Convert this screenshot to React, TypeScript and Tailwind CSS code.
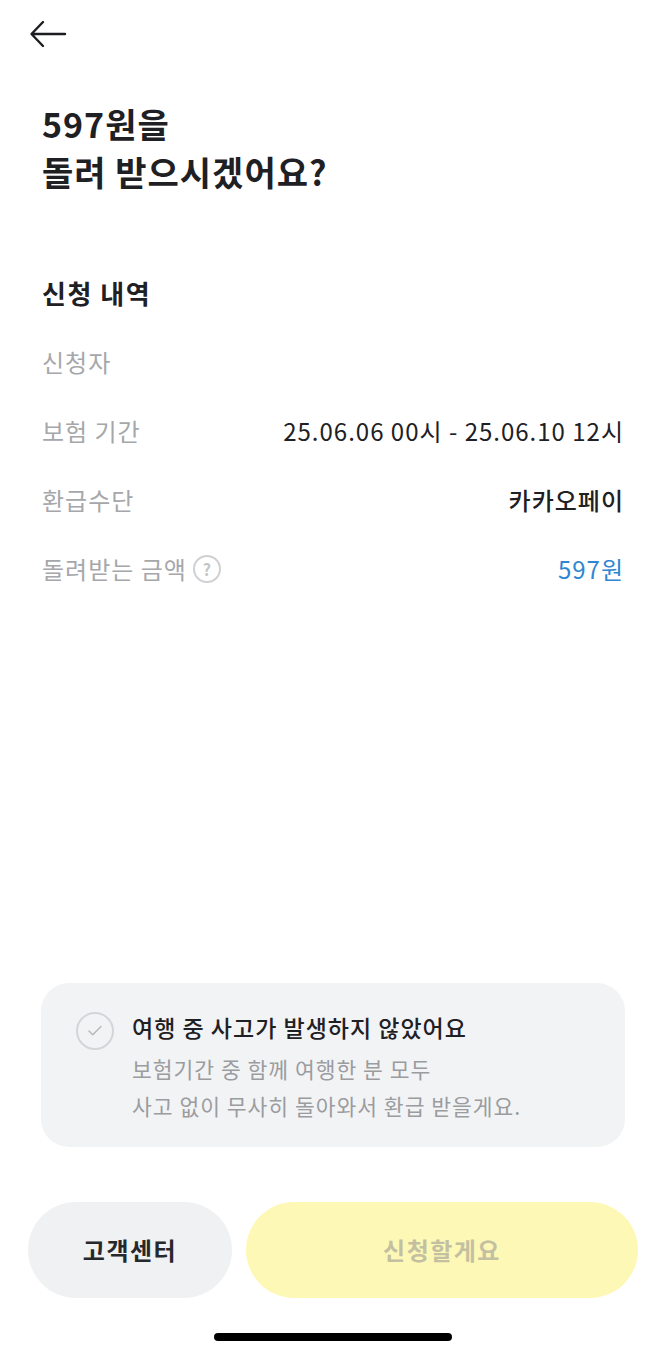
import { Check } from 'lucide-react';

const FONT = "font-['Noto_Sans_CJK_KR','Noto_Sans',sans-serif]";

type Row = { label: string; value: string; tone?: 'dark' | 'blue'; help?: boolean; bold?: boolean };

const ROWS: Row[] = [
  { label: '신청자', value: '' },
  { label: '보험 기간', value: '25.06.06 00시 - 25.06.10 12시' },
  { label: '환급수단', value: '카카오페이', bold: true },
  { label: '돌려받는 금액', value: '597원', tone: 'blue', help: true },
];

function BackArrow() {
  return (
    <svg width="38" height="28" viewBox="0 0 38 28" fill="none" aria-hidden="true">
      <path d="M36 14H3M14 2L2.5 14L14 26" stroke="#1c1d21" strokeWidth="2.4" strokeLinecap="round" strokeLinejoin="round" />
    </svg>
  );
}

function HelpIcon() {
  return (
    <span className="ml-[6px] flex h-[28px] w-[28px] items-center justify-center rounded-full border-2 border-[#cfd0d3] text-[16px] font-semibold leading-none tracking-normal text-[#c4c5c8]">
      ?
    </span>
  );
}

export default function App() {
  return (
    <div className={`flex h-[1356px] w-[666px] flex-col bg-white ${FONT}`}>
      {/* Header */}
      <div className="flex h-[68px] items-center pl-[29px]">
        <BackArrow />
      </div>

      <h1 className="mt-[32px] px-[42px] text-[34px] font-bold leading-[48px] tracking-[1px] text-[#1e2024]">
        597원을
        <br />
        돌려 받으시겠어요?
      </h1>

      {/* Summary */}
      <h2 className="mt-[79px] px-[42px] text-[26px] font-bold leading-[36px] tracking-[1.5px] text-[#1e2024]">신청 내역</h2>
      <div className="mt-[16px] flex flex-col px-[42px]">
        {ROWS.map((r) => (
          <div key={r.label} className="flex h-[69px] items-center justify-between">
            <div className="flex items-center text-[24px] tracking-[1px] text-[#a6a7aa]">
              {r.label}
              {r.help && <HelpIcon />}
            </div>
            <div
              className={`text-[24px] tracking-[1px] ${r.bold ? 'font-medium' : ''} ${
                r.tone === 'blue' ? 'text-[#2f86d1]' : 'text-[#1e2024]'
              }`}
            >
              {r.value}
            </div>
          </div>
        ))}
      </div>

      <div className="flex-1" />

      {/* Confirmation card */}
      <div className="mx-[41px] flex gap-[18px] rounded-[28px] bg-[#f2f3f5] pb-[23px] pl-[35px] pr-4 pt-[28px]">
        <span className="mt-[1px] flex h-[38px] w-[38px] shrink-0 items-center justify-center rounded-full border-2 border-[#d3d5d8]">
          <Check size={18} strokeWidth={2} color="#b6b8bc" />
        </span>
        <div className="flex flex-col">
          <p className="text-[23px] font-medium leading-[32px] tracking-[1px] text-[#1e2024]">여행 중 사고가 발생하지 않았어요</p>
          <p className="mt-[7px] text-[21.5px] leading-[37px] tracking-[1px] text-[#9a9ca0]">
            보험기간 중 함께 여행한 분 모두
            <br />
            사고 없이 무사히 돌아와서 환급 받을게요.
          </p>
        </div>
      </div>

      {/* Bottom buttons */}
      <div className="mt-[55px] flex gap-[14px] pl-[28px] pr-[28px]">
        <button className="flex h-[96px] w-[204px] items-center justify-center rounded-full bg-[#eff1f3] text-[24px] font-bold tracking-[1.5px] text-[#26282c]">
          고객센터
        </button>
        <button className="flex h-[96px] flex-1 items-center justify-center rounded-full bg-[#fef8b6] text-[24px] font-bold tracking-[1.5px] text-[#c3c0a2]">
          신청할게요
        </button>
      </div>

      <div className="mt-[35px] flex justify-center pb-[15px]">
        <div className="h-[8px] w-[238px] rounded-full bg-black" />
      </div>
    </div>
  );
}
